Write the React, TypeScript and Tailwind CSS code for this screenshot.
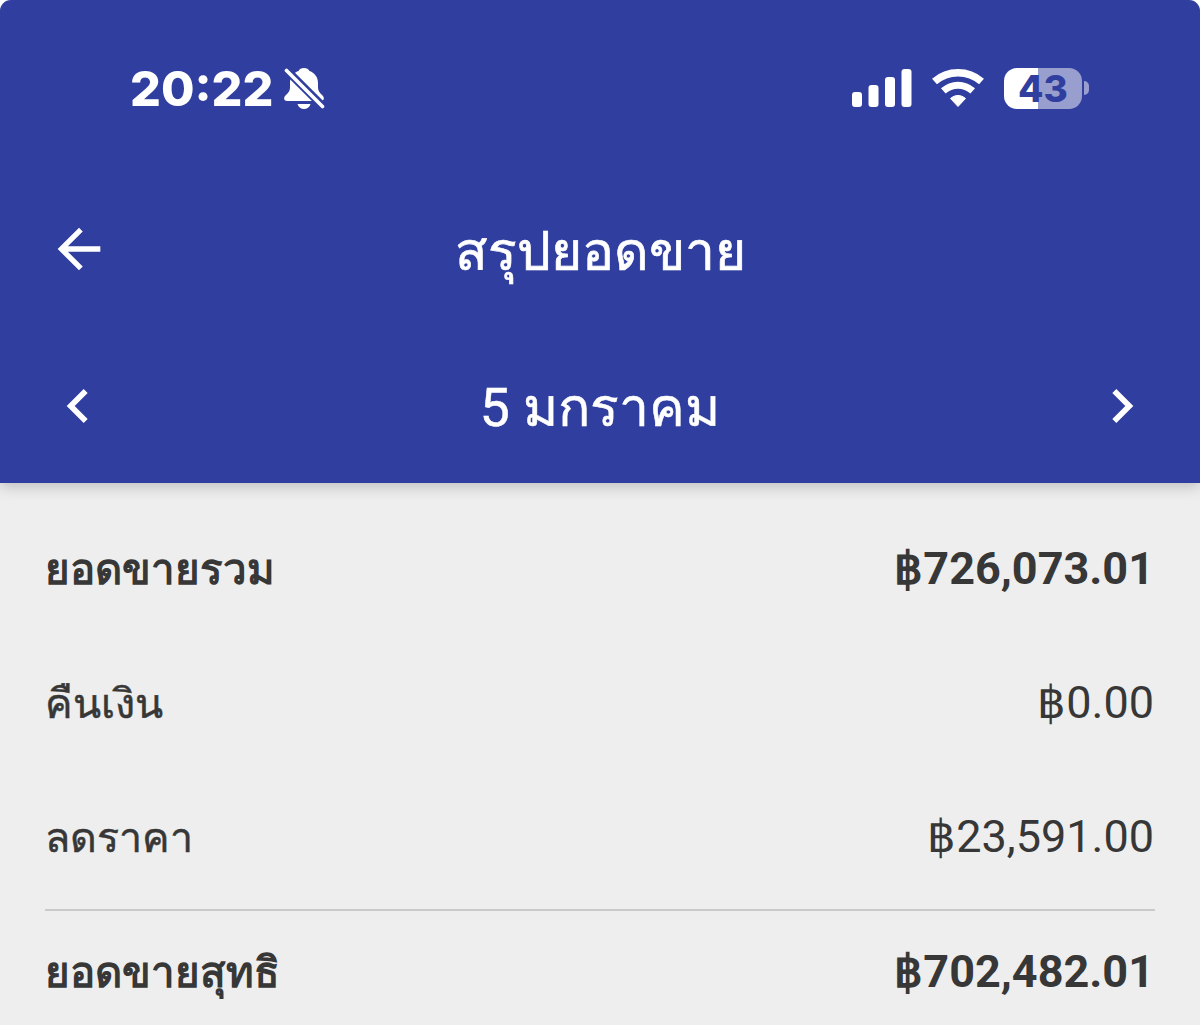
type Row = { label: string; value: string; bold?: boolean; divider?: boolean };

const ROWS: Row[] = [
  { label: 'ยอดขายรวม', value: '฿726,073.01', bold: true },
  { label: 'คืนเงิน', value: '฿0.00' },
  { label: 'ลดราคา', value: '฿23,591.00' },
  { label: 'ยอดขายสุทธิ', value: '฿702,482.01', bold: true, divider: true },
];

function MutedBell() {
  return (
    <svg width="42" height="44" viewBox="0 0 42 44" fill="none">
      <path
        d="M21 2c-2.600 0-4.600 1.200-5.500 3C10 7 7 11.500 7 17v4.500c0 3.500-1.500 5.300-4.500 8C.3 31.600.8 35 4 35h34c3.200 0 3.700-3.400 1.500-5.500-3-2.700-4.500-4.500-4.500-8V17c0-5.500-3-10-8.500-12-.9-1.800-2.900-3-5.500-3z"
        fill="#fff"
      />
      <path d="M14.500 38h13c-1 3.300-3.500 5-6.500 5s-5.500-1.700-6.500-5z" fill="#fff" />
      <path d="M1 1.500L41 41.500" stroke="#303f9f" strokeWidth="8" />
      <path d="M3.500 4.500L39.500 40.500" stroke="#fff" strokeWidth="3.600" strokeLinecap="round" />
    </svg>
  );
}

function Signal() {
  return (
    <svg width="60" height="38" viewBox="0 0 60 38" fill="#fff">
      <rect x="0" y="23" width="10" height="15" rx="3" />
      <rect x="16.500" y="16" width="10" height="22" rx="3" />
      <rect x="33" y="8" width="10" height="30" rx="3" />
      <rect x="49.500" y="0" width="10" height="38" rx="3" />
    </svg>
  );
}

function Wifi() {
  return (
    <svg width="54" height="40" viewBox="0 0 54 40" fill="none" stroke="#fff">
      <path d="M3.500 13.500C17 1.800 37 1.800 50.500 13.500" strokeWidth="7.500" />
      <path d="M12.300 22.900C21 15.200 33 15.200 41.700 22.900" strokeWidth="7" />
      <path d="M27 38.500l-7.500-8c4.500-4 10.500-4 15 0z" fill="#fff" stroke="#fff" strokeWidth="1" strokeLinejoin="round" />
    </svg>
  );
}

function Battery() {
  return (
    <div className="flex items-center gap-[2px]">
      <div className="flex h-[41px] w-[78px] items-center justify-center rounded-[13px] bg-linear-to-r from-white from-[44%] to-[#989fcf] to-[44%] text-[37px] leading-none font-extrabold text-[#303f9f]">
        43
      </div>
      <div className="h-[14px] w-[5px] rounded-r-full bg-[#989fcf]" />
    </div>
  );
}

export default function App() {
  return (
    <div className="h-[1025px] w-[1200px] overflow-hidden bg-white font-[Roboto,sans-serif] text-[#373737]">
      <div className="h-full overflow-hidden rounded-t-[11px] bg-[#eeeeee]">
        <header className="h-[483px] bg-[#303f9f] text-white shadow-[0_3px_14px_rgba(0,0,0,0.22)]">
          <div className="flex h-[172px] items-center justify-between pt-1 pr-[111px] pl-[130px] font-[Inter,sans-serif]">
            <div className="flex items-center gap-[10px]">
              <span className="pt-[3px] text-[48.500px] font-extrabold">20:22</span>
              <MutedBell />
            </div>
            <div className="flex items-center gap-[19px]">
              <Signal />
              <Wifi />
              <Battery />
            </div>
          </div>

          <div className="grid h-[154px] grid-cols-[68px_1fr_68px] items-center px-[45px]">
            <button aria-label="Back">
              <svg width="64" height="64" viewBox="0 0 24 24" fill="currentColor" className="ml-[1.500px]">
                <path d="M20 11H7.830l5.590-5.590L12 4l-8 8 8 8 1.410-1.410L7.830 13H20v-2z" />
              </svg>
            </button>
            <h1 className="pt-[7px] text-center text-[53.300px] [-webkit-text-stroke:0.7px_white]">สรุปยอดขาย</h1>
          </div>

          <div className="grid h-[157px] grid-cols-[68px_1fr_68px] items-center px-[44px] pt-[2px]">
            <button aria-label="Previous day">
              <svg width="68" height="68" viewBox="0 0 24 24" fill="currentColor">
                <path d="M15.410 7.410L14 6l-6 6 6 6 1.410-1.410L10.830 12z" />
              </svg>
            </button>
            <h2 className="pt-[6px] text-center text-[53.500px] [-webkit-text-stroke:0.5px_white]">5 มกราคม</h2>
            <button aria-label="Next day">
              <svg width="68" height="68" viewBox="0 0 24 24" fill="currentColor">
                <path d="M10 6L8.590 7.410 13.170 12l-4.580 4.590L10 18l6-6z" />
              </svg>
            </button>
          </div>
        </header>

        <main className="px-[45px] pt-[19px]">
          {ROWS.map((row) => (
            <div
              key={row.label}
              className={`flex items-baseline justify-between pr-px text-[45px] ${row.bold ? 'font-bold' : ''} ${
                row.divider ? 'mt-[5px] border-t-2 border-[#cacaca] leading-[122px]' : 'h-[134px] leading-[134px]'
              }`}
            >
              <span className={row.bold ? 'text-[42px]' : 'text-[41.200px] [-webkit-text-stroke:0.5px_#373737]'}>{row.label}</span>
              <span>{row.value}</span>
            </div>
          ))}
        </main>
      </div>
    </div>
  );
}
